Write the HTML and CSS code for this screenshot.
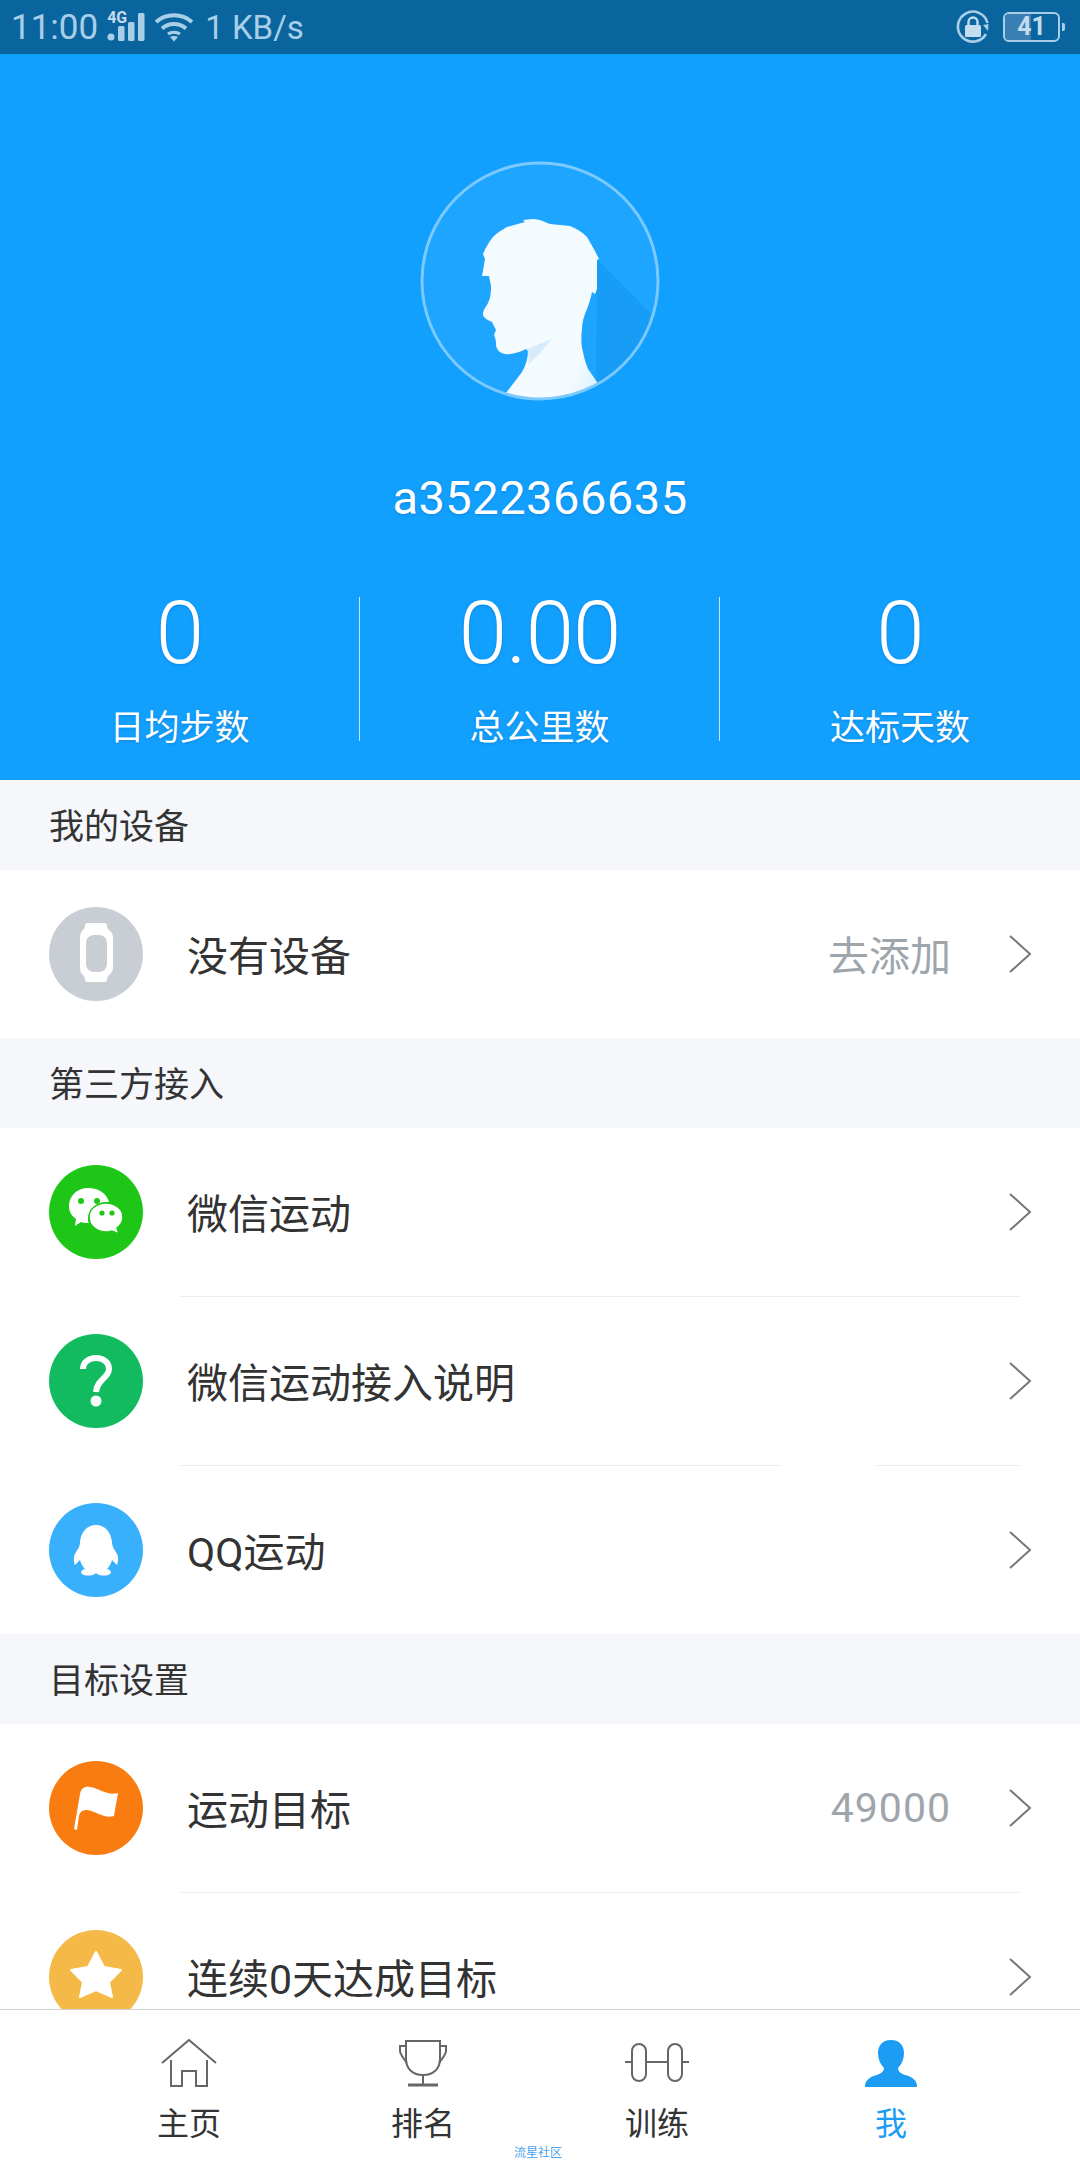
FILE: index.html
```html
<!DOCTYPE html>
<html lang="zh-CN">
<head>
  <meta charset="UTF-8">
  <title>我</title>
  <meta name="viewport" content="width=device-width, initial-scale=1.0">
  <link rel="stylesheet" href="styles.css">
</head>
<body>

<div class="screen">

  <!-- Status bar -->
  <div class="status-bar">
    <div class="status-left">
      <span class="clock">11:00</span>
      <span class="signal">
        <svg width="38" height="28" viewBox="0 0 38 28">
          <circle cx="4" cy="24" r="3.5" fill="#a9cfe8"/>
          <rect x="11" y="13" width="6.5" height="15" rx="1.5" fill="#a9cfe8"/>
          <rect x="21" y="9" width="6.5" height="19" rx="1.5" fill="#a9cfe8"/>
          <rect x="31" y="0" width="6.5" height="28" rx="1.5" fill="#a9cfe8"/>
        </svg>
        <span class="signal-tag">4G</span>
      </span>
      <svg class="wifi" width="40" height="30" viewBox="0 0 40 30" fill="none" stroke="#a9cfe8" stroke-width="4">
        <path d="M2 10C12 1 28 1 38 10"/>
        <path d="M8 16.500C15 10.500 25 10.500 32 16.500"/>
        <path d="M14 22C17 19.500 23 19.500 26 22" stroke-width="3"/>
        <path d="M16 25L20 29.500L24 25C21.500 23.500 18.500 23.500 16 25Z" fill="#a9cfe8" stroke="none"/>
      </svg>
      <span class="speed">1 KB/s</span>
    </div>
    <div class="status-right">
      <svg width="34" height="34" viewBox="0 0 34 34" fill="none">
        <path d="M30 24A15 15 0 1 1 31.500 13" stroke="#a9cfe8" stroke-width="2.600"/>
        <path d="M27 15L32 21L32.500 14Z" fill="#a9cfe8"/>
        <rect x="9" y="15" width="16" height="12" rx="1.500" fill="#c3dcee"/>
        <path d="M12.500 15V12A4.500 4.500 0 0 1 21.500 12V15" stroke="#c3dcee" stroke-width="2.400"/>
      </svg>
      <div class="battery">
        <div class="battery-body">
          <span class="battery-fill"></span>
          <span class="battery-num">41</span>
        </div>
        <span class="battery-tip"></span>
      </div>
    </div>
  </div>

  <!-- Profile header -->
  <div class="hero">
    <div class="avatar">
      <svg width="240" height="240" viewBox="0 0 240 240">
        <defs>
          <clipPath id="avatarClip"><circle cx="120" cy="120" r="118"/></clipPath>
          <linearGradient id="neckShade" x1="0.6" y1="0.7" x2="1" y2="0.95">
            <stop offset="0.5" stop-color="#f4fbff"/>
            <stop offset="1" stop-color="#d8edfb"/>
          </linearGradient>
        </defs>
        <circle cx="120" cy="120" r="118" fill="#1ea5ff"/>
        <g clip-path="url(#avatarClip)">
          <path d="M177 98L240 162V240H176Z" fill="#179df6"/>
          <path d="M86 232L102 211C106 204 108 197 108 190L106 188C98 192 90 194 85 193C79 192 76 188 76 183C76 179 75 176 74 174L76 169L72 161C68 159 63 157 63 153C63 149 66 146 68 142C71 136 71 130 71 125L69 115L62 115L65 98L63 93C66 86 69 81 73 76C78 71 82 69 87 66L105 61L103 59L113 58C119 58 125 61 130 63L150 65C157 68 162 71 167 76L175 90L179 98L177 99V128L175 133L172 131C171 137 169 142 167 148C164 155 162 161 162 168C161 177 161 184 163 191C164 197 166 203 168 208L177 221L180 240H80Z" fill="url(#neckShade)"/>
          <path d="M107 188L132 178C125 187 116 196 108 204C109 198 109 193 107 188Z" fill="#d6ecfb"/>
        </g>
        <circle cx="120" cy="120" r="118" fill="none" stroke="#7cc9fd" stroke-width="3"/>
      </svg>
    </div>
    <div class="username">a3522366635</div>
    <div class="stats">
      <div class="stat">
        <div class="stat-num">0</div>
        <div class="stat-label">日均步数</div>
      </div>
      <div class="stat">
        <div class="stat-num">0.00</div>
        <div class="stat-label">总公里数</div>
      </div>
      <div class="stat">
        <div class="stat-num">0</div>
        <div class="stat-label">达标天数</div>
      </div>
    </div>
  </div>

  <!-- Settings list -->
  <div class="section-title">我的设备</div>
  <div class="row">
    <span class="row-icon icon-grey">
      <svg width="94" height="94" viewBox="0 0 94 94" fill="none">
        <path d="M38 16H56C58 16 58 20 59 22C62 24 64 27 64 31V60C64 64 62 67 59 69C58 72 58 75 56 75H38C36 75 36 72 35 69C32 67 31 64 31 60V31C31 27 32 24 35 22C36 20 36 16 38 16Z" fill="#fff"/>
        <rect x="37" y="28" width="21" height="37" rx="8" fill="#c9ced4"/>
      </svg>
    </span>
    <span class="row-text">没有设备</span>
    <span class="row-value">去添加</span>
    <svg class="chevron" width="24" height="38" viewBox="0 0 24 38" fill="none"><path d="M2 1L22 19L2 37" stroke="#777" stroke-width="2"/></svg>
  </div>

  <div class="section-title">第三方接入</div>
  <div class="row">
    <span class="row-icon icon-wechat">
      <svg width="94" height="94" viewBox="0 0 94 94">
        <path d="M39 23C50 23 58 29 60 37C49 36 39 44 39 54C39 56 39 57 40 58C37 58 34 58 32 57L26 61L27 54C23 51 20 47 20 41C20 31 28 23 39 23Z" fill="#fff"/>
        <path d="M57 38C66 38 74 44 74 52C74 57 72 60 68 63L70 69L63 66C61 67 59 67 57 67C48 67 40 61 40 52C40 44 48 38 57 38Z" fill="#fff" stroke="#1ec717" stroke-width="1.500"/>
        <circle cx="32" cy="36" r="3" fill="#1ec717"/>
        <circle cx="48" cy="36" r="3" fill="#1ec717"/>
        <circle cx="53" cy="48" r="2.600" fill="#1ec717"/>
        <circle cx="63" cy="48" r="2.600" fill="#1ec717"/>
      </svg>
    </span>
    <span class="row-text">微信运动</span>
    <svg class="chevron" width="24" height="38" viewBox="0 0 24 38" fill="none"><path d="M2 1L22 19L2 37" stroke="#777" stroke-width="2"/></svg>
  </div>
  <div class="row-line"></div>
  <div class="row">
    <span class="row-icon icon-help">
      <svg width="94" height="94" viewBox="0 0 94 94" fill="none">
        <path d="M34 35C34 28 40 24 47 24C54 24 60 28 60 35C60 44 48 45 47 58" stroke="#fff" stroke-width="6"/>
        <circle cx="47" cy="67" r="5.500" fill="#fff"/>
      </svg>
    </span>
    <span class="row-text">微信运动接入说明</span>
    <svg class="chevron" width="24" height="38" viewBox="0 0 24 38" fill="none"><path d="M2 1L22 19L2 37" stroke="#777" stroke-width="2"/></svg>
  </div>
  <div class="row-line row-line-gap"><span></span><span></span></div>
  <div class="row">
    <span class="row-icon icon-qq">
      <svg width="94" height="94" viewBox="0 0 94 94">
        <path d="M47 22C57 22 62 30 63 39C63 44 66 47 68 51C70 55 69 60 68 62L63 57C62 61 60 64 58 66C63 67 63 71 59 72C55 73 50 73 47 70C44 73 39 73 35 72C31 71 31 67 36 66C34 64 32 61 31 57L26 62C25 60 24 55 26 51C28 47 31 44 31 39C32 30 37 22 47 22Z" fill="#fff"/>
      </svg>
    </span>
    <span class="row-text">QQ运动</span>
    <svg class="chevron" width="24" height="38" viewBox="0 0 24 38" fill="none"><path d="M2 1L22 19L2 37" stroke="#777" stroke-width="2"/></svg>
  </div>

  <div class="section-title">目标设置</div>
  <div class="row">
    <span class="row-icon icon-goal">
      <svg width="94" height="94" viewBox="0 0 94 94">
        <path d="M25 68L31 33C32 27 36 25 41 26C50 27 58 35 69 32L65 55C55 58 47 50 38 49C33 49 31 51 30 55L28 69Z" fill="#fff"/>
      </svg>
    </span>
    <span class="row-text">运动目标</span>
    <span class="row-value row-number">49000</span>
    <svg class="chevron" width="24" height="38" viewBox="0 0 24 38" fill="none"><path d="M2 1L22 19L2 37" stroke="#777" stroke-width="2"/></svg>
  </div>
  <div class="row-line"></div>
  <div class="row">
    <span class="row-icon icon-star">
      <svg width="94" height="94" viewBox="0 0 94 94">
        <path d="M47 22L55 37L72 40L60 52L63 67L47 60L31 67L34 52L22 40L39 37Z" fill="#fff" stroke="#fff" stroke-width="2" stroke-linejoin="round"/>
      </svg>
    </span>
    <span class="row-text">连续0天达成目标</span>
    <svg class="chevron" width="24" height="38" viewBox="0 0 24 38" fill="none"><path d="M2 1L22 19L2 37" stroke="#777" stroke-width="2"/></svg>
  </div>

  <!-- Bottom tabs -->
  <div class="tabbar">
    <div class="tab">
      <svg width="56" height="50" viewBox="0 0 56 50" fill="none" stroke="#666" stroke-width="2">
        <path d="M1 24L28 1L55 24"/>
        <path d="M10 21V47H21V32H35V47H46V21"/>
      </svg>
      <span>主页</span>
    </div>
    <div class="tab">
      <svg width="50" height="50" viewBox="0 0 50 50" fill="none" stroke="#666" stroke-width="2">
        <path d="M8 2H42V20C42 30 35 36 25 36C15 36 8 30 8 20Z"/>
        <path d="M8 7H2V12C2 15 5 19 9 24M42 7H48V12C48 15 45 19 41 24"/>
        <path d="M25 36V46"/>
        <path d="M10 46H40" stroke-width="3"/>
      </svg>
      <span>排名</span>
    </div>
    <div class="tab">
      <svg width="66" height="50" viewBox="0 0 66 50" fill="none" stroke="#666" stroke-width="2">
        <rect x="8" y="5" width="14" height="37" rx="7"/>
        <rect x="44" y="5" width="14" height="37" rx="7"/>
        <path d="M1 23H8M22 23H44M58 23H65"/>
      </svg>
      <span>训练</span>
    </div>
    <div class="tab tab-active">
      <svg width="54" height="50" viewBox="0 0 54 50">
        <path d="M27 1C36 1 40 7 40 14C40 20 38 25 34 29C34 32 36 34 41 36C49 38 53 42 53 47V48H1V47C1 42 5 38 13 36C18 34 20 32 20 29C16 25 14 20 14 14C14 7 18 1 27 1Z" fill="#1c9cf3"/>
      </svg>
      <span>我</span>
    </div>
    <div class="watermark">流星社区</div>
  </div>

</div>

</body>
</html>
```

FILE: styles.css
```css
html, body {
  margin: 0;
  padding: 0;
}

body {
  font-family: Roboto, "Noto Sans CJK SC", sans-serif;
  background-color: #fff;
  color: #333;
}

.screen {
  width: 1080px;
  height: 2160px;
  position: relative;
  overflow: hidden;
}

/* status bar */
.status-bar {
  height: 54px;
  background-color: #0a659f;
  color: #a9cfe8;
  display: flex;
  justify-content: space-between;
  align-items: center;
  padding: 0 15px 0 11px;
}

.status-left,
.status-right {
  display: flex;
  align-items: center;
}

.clock {
  font-size: 35px;
}

.signal {
  position: relative;
  width: 38px;
  height: 30px;
  margin-left: 9px;
  display: block;
}

.signal svg {
  position: absolute;
  left: 0;
  top: 1px;
}

.signal-tag {
  position: absolute;
  left: 0;
  top: -2px;
  font-size: 16px;
  font-weight: 700;
  line-height: 16px;
  background-color: #0a659f;
  padding-right: 1px;
  color: #c3dcee;
}

.wifi {
  margin-left: 9px;
}

.speed {
  font-size: 33px;
  margin-left: 11px;
}

.battery {
  display: flex;
  align-items: center;
  margin-left: 13px;
}

.battery-body {
  position: relative;
  width: 53px;
  height: 26px;
  border: 2px solid #a9cfe8;
  border-radius: 6px;
  overflow: hidden;
}

.battery-fill {
  display: block;
  width: 26px;
  height: 26px;
  background-color: #3a7fb3;
}

.battery-num {
  position: absolute;
  left: 0;
  right: 0;
  top: 0;
  text-align: center;
  font-size: 25px;
  line-height: 26px;
  font-weight: 700;
  color: #c3dcee;
}

.battery-tip {
  width: 3px;
  height: 8px;
  margin-left: 2px;
  background-color: #a9cfe8;
  border-radius: 0 2px 2px 0;
}

/* profile */
.hero {
  height: 726px;
  background-color: #12a0ff;
  color: #fff;
  display: flex;
  flex-direction: column;
  align-items: center;
  padding-top: 107px;
  box-sizing: border-box;
}

.avatar {
  width: 240px;
  height: 240px;
}

.username {
  font-size: 47px;
  line-height: 54px;
  margin-top: 70px;
  letter-spacing: 0.5px;
  text-shadow: 0 1px 3px rgba(0, 60, 120, 0.25);
}

.stats {
  width: 100%;
  display: grid;
  grid-template-columns: 359px 360px 361px;
  margin-top: 72px;
}

.stat {
  height: 144px;
  text-align: center;
  border-left: 1px solid #bfe4fd;
}

.stat:first-child {
  border-left: none;
}

.stat-num {
  font-size: 87px;
  font-weight: 300;
  line-height: 80px;
  margin-top: -4px;
  letter-spacing: -1px;
  text-shadow: 0 1px 3px rgba(0, 60, 120, 0.25);
}

.stat-label {
  font-size: 35px;
  line-height: 44px;
  margin-top: 34px;
  text-shadow: 0 1px 3px rgba(0, 60, 120, 0.25);
}

/* list */
.section-title {
  height: 90px;
  line-height: 95px;
  padding-left: 49px;
  font-size: 35px;
  background-color: #f5f7fb;
}

.row {
  height: 168px;
  display: flex;
  align-items: center;
  padding: 0 48px 0 49px;
  background-color: #fff;
}

.row-icon {
  width: 94px;
  height: 94px;
  border-radius: 50%;
  flex-shrink: 0;
  display: block;
}

.row-icon svg {
  display: block;
}

.icon-grey { background-color: #c9ced4; }
.icon-wechat { background-color: #1ec717; }
.icon-help { background-color: #12bb60; }
.icon-qq { background-color: #39b0fb; }
.icon-goal { background-color: #f87c10; }
.icon-star { background-color: #f5b947; }

.row-text {
  font-size: 41px;
  margin-left: 44px;
  margin-bottom: 2px;
  flex: 1;
}

.row-value {
  font-size: 41px;
  color: #9ea5ab;
  margin-right: 57px;
  margin-bottom: 2px;
}

.row-number {
  letter-spacing: 1px;
  margin-bottom: 0;
}

.row-line {
  height: 1px;
  margin: 0 60px 0 180px;
  background-color: #eee;
}

.row-line-gap {
  display: flex;
  justify-content: space-between;
  background-color: transparent;
}

.row-line-gap span {
  height: 1px;
  background-color: #eee;
}

.row-line-gap span:first-child { width: 602px; }
.row-line-gap span:last-child { width: 144px; }

/* tabs */
.tabbar {
  position: absolute;
  left: 0;
  right: 0;
  bottom: 0;
  height: 151px;
  box-sizing: border-box;
  border-top: 1px solid #d2d2d2;
  background-color: #fff;
  display: grid;
  grid-template-columns: repeat(4, 234px);
  justify-content: center;
}

.tab {
  display: flex;
  flex-direction: column;
  align-items: center;
  padding-top: 29px;
  font-size: 32px;
}

.tab svg {
  display: block;
  height: 50px;
}

.tab span {
  line-height: 40px;
  margin-top: 15px;
}

.tab-active {
  color: #1c9cf3;
}

.watermark {
  position: absolute;
  left: 514px;
  bottom: 0;
  font-size: 12px;
  line-height: 14px;
  color: #4aa3ea;
}
```
